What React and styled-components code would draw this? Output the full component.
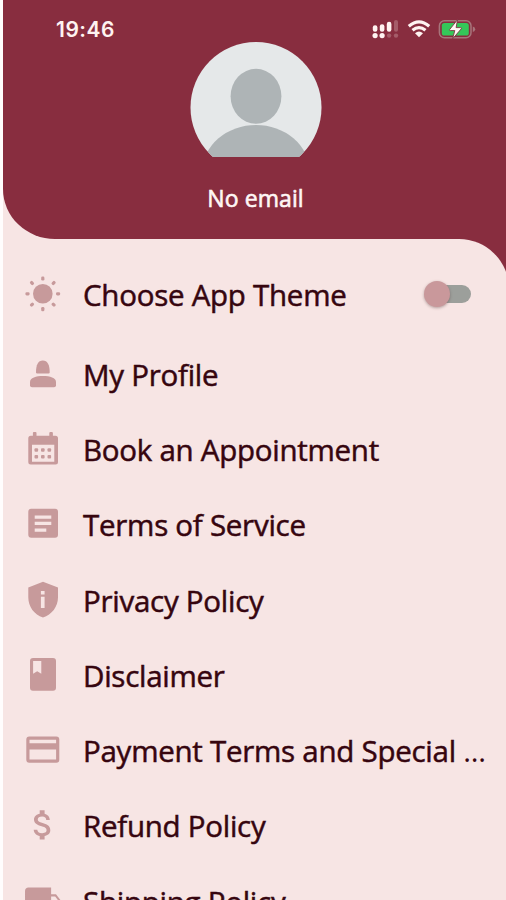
import React, { useState } from 'react';
import styled, { createGlobalStyle } from 'styled-components';

const GlobalStyle = createGlobalStyle`
	* {
		box-sizing: border-box;
	}
	body {
		margin: 0;
		background: #fffdfd;
		overflow: hidden;
	}
`;

const Screen = styled.div`
	width: 100%;
	height: 900px;
	padding-left: 3px;
	overflow: hidden;
	background: #fffdfd;
	font-family: 'Open Sans', 'Noto Sans', sans-serif;
`;

const Drawer = styled.div`
	width: 506px;
	background: #f7e5e4;
`;

const Header = styled.header`
	height: 239px;
	display: flex;
	flex-direction: column;
	background: #882d3f;
	border-bottom-left-radius: 52px 50px;
`;

const StatusBar = styled.div`
	height: 42px;
	padding: 17px 33px 0 53px;
	display: flex;
	justify-content: space-between;
	align-items: flex-start;
`;

const Time = styled.span`
	font-family: 'Inter', sans-serif;
	font-size: 21px;
	font-weight: 600;
	line-height: 26px;
	letter-spacing: 0.5px;
	color: #fff3f1;
`;

const StatusIcons = styled.svg`
	width: 106px;
	height: 25px;
`;

const Account = styled.div`
	width: 505px;
	display: flex;
	flex-direction: column;
	align-items: center;
`;

const Avatar = styled.svg`
	width: 132px;
	height: 115px;
`;

const Email = styled.div`
	margin-top: 26px;
	font-size: 23px;
	line-height: 31px;
	letter-spacing: 0.1px;
	color: #fff6f5;
	-webkit-text-stroke: 0.6px #fff6f5;
`;

const PanelBack = styled.div`
	background: #882d3f;
`;

const Panel = styled.nav`
	height: 661px;
	padding-top: 12px;
	overflow: hidden;
	background: #f7e5e4;
	border-top-right-radius: 50px;
`;

const Row = styled.div`
	height: ${(props) => (props.$tall ? '85px' : '75.3px')};
	padding-left: 20px;
	padding-right: 38px;
	display: flex;
	align-items: center;
`;

const Icon = styled.svg`
	width: 40px;
	height: 40px;
	flex: none;
	fill: #c79a9b;
`;

const Label = styled.span`
	flex: 1;
	padding-top: 2px;
	margin-left: 20px;
	font-size: 29.5px;
	line-height: 40px;
	white-space: nowrap;
	color: #36050f;
	-webkit-text-stroke: 0.5px #36050f;
	letter-spacing: -0.26px;
`;

const Dots = styled.span`
	-webkit-text-stroke: 0;
`;

const Track = styled.button`
	width: 46px;
	height: 18px;
	padding: 0;
	border: 0;
	border-radius: 9px;
	display: flex;
	align-items: center;
	justify-content: ${(props) => (props.$on ? 'flex-end' : 'flex-start')};
	background: #9c9f9b;
`;

const Thumb = styled.span`
	width: 26px;
	height: 26px;
	flex: none;
	margin-left: -1px;
	border-radius: 50%;
	background: #c9989b;
	box-shadow: 0 1px 3px rgba(80, 50, 50, 0.4);
`;

const icons = {
	sun: (
		<>
			<circle cx="19.8" cy="19.8" r="9.8" />
			{[0, 45, 90, 135, 180, 225, 270, 315].map((angle) => (
				<rect
					key={angle}
					x="18.2"
					y="2.4"
					width="3.2"
					height="4.2"
					rx="1.3"
					transform={`rotate(${angle} 19.8 19.8)`}
				/>
			))}
		</>
	),
	person: (
		<>
			<path d="M13 18.5C13 11 15 6.6 19.8 6.6S26.7 11 26.7 18.5Q26.7 19.6 25.5 19.6H14.2Q13 19.6 13 18.5Z" />
			<path d="M7 28C7 23.8 13 22 20 22s13 1.8 13 6v3.3q0 2-2 2H9q-2 0-2-2Z" />
		</>
	),
	calendar: (
		<>
			<rect x="9.9" y="3" width="3.6" height="6" rx="1" />
			<rect x="26.3" y="3" width="3.6" height="6" rx="1" />
			<path
				fillRule="evenodd"
				d="M7.8 6.7H32.5Q35 6.7 35 9.2V33Q35 35.5 32.5 35.5H7.8Q5.3 35.5 5.3 33V9.2Q5.3 6.7 7.8 6.7ZM9 15.7V32.7H31.3V15.7Z"
			/>
			{[21, 27.7].map((y) =>
				[13.3, 19.8, 26.3].map((x) => (
					<rect key={`${x}-${y}`} x={x - 1.8} y={y - 1.7} width="3.6" height="3.4" rx="1" />
				))
			)}
		</>
	),
	article: (
		<path
			fillRule="evenodd"
			d="M8.3 4.8H32Q35 4.8 35 7.8V30.8Q35 33.8 32 33.8H8.3Q5.3 33.8 5.3 30.8V7.8Q5.3 4.8 8.3 4.8ZM11.7 11.4V14.7H28.3V11.4ZM11.7 17.8V21.1H28.3V17.8ZM11.7 24.4V27.7H23.3V24.4Z"
		/>
	),
	shield: (
		<path
			fillRule="evenodd"
			d="M20 1.8L35 7.6V17.5C35 26.6 28.8 34.8 20 37.4C11.2 34.8 5.3 26.6 5.3 17.5V7.6ZM17.9 11V14.6H21.6V11ZM17.9 16.8V28H21.6V16.8Z"
		/>
	),
	book: (
		<path
			fillRule="evenodd"
			d="M10 3.1H30Q33 3.1 33 6.1V32.8Q33 35.8 30 35.8H10Q7 35.8 7 32.8V6.1Q7 3.1 10 3.1ZM10.1 6V18.8L14.2 16.2L18.3 18.8V6Z"
		/>
	),
	card: (
		<path
			fillRule="evenodd"
			d="M6.3 6.5H33.3Q36.3 6.5 36.3 9.5V29.8Q36.3 32.8 33.3 32.8H6.3Q3.3 32.8 3.3 29.8V9.5Q3.3 6.5 6.3 6.5ZM6.5 9.8V13.2H33.1V9.8ZM6.5 19.5V29.6H33.1V19.5Z"
		/>
	),
	money: (
		<path
			transform="translate(0.4 0.3) scale(1.63)"
			d="M11.8 10.9c-2.27-.59-3-1.2-3-2.15 0-1.09 1.01-1.85 2.7-1.85 1.78 0 2.44.85 2.5 2.1h2.21c-.07-1.72-1.12-3.3-3.21-3.81V3h-3v2.16c-1.94.42-3.5 1.68-3.5 3.61 0 2.31 1.91 3.46 4.7 4.13 2.5.6 3 1.48 3 2.41 0 .69-.49 1.79-2.7 1.79-2.06 0-2.87-.92-2.98-2.1h-2.2c.12 2.19 1.76 3.42 3.68 3.83V21h3v-2.15c1.95-.37 3.5-1.5 3.5-3.55 0-2.84-2.43-3.81-4.7-4.4z"
		/>
	),
	truck: (
		<path
			transform="translate(0.4 0.1) scale(1.63)"
			d="M20 8h-3V4H3c-1.1 0-2 .9-2 2v11h2c0 1.66 1.34 3 3 3s3-1.34 3-3h6c0 1.66 1.34 3 3 3s3-1.34 3-3h2v-5l-3-4zm-.5 1.5l1.96 2.5H17V9.5h2.5z"
		/>
	),
};

const menuItems = [
	{ icon: 'person', label: 'My Profile' },
	{ icon: 'calendar', label: 'Book an Appointment' },
	{ icon: 'article', label: 'Terms of Service' },
	{ icon: 'shield', label: 'Privacy Policy' },
	{ icon: 'book', label: 'Disclaimer' },
	{ icon: 'card', label: 'Payment Terms and Special ', cut: true },
	{ icon: 'money', label: 'Refund Policy' },
	{ icon: 'truck', label: 'Shipping Policy' },
];

const PhoneStatus = () => (
	<StatusIcons viewBox="370 17 106 25">
		<g fill="#fff3f1">
			<rect x="372.8" y="25.3" width="4.6" height="6.4" rx="2.2" />
			<rect x="379.8" y="24.3" width="4.6" height="7.4" rx="2.2" />
			<rect x="386.8" y="21.8" width="4.6" height="9.9" rx="2.2" />
			<circle cx="375.1" cy="35.6" r="2.6" />
			<circle cx="382.1" cy="35.6" r="2.6" />
		</g>
		<g fill="#a55c69">
			<circle cx="389.1" cy="35.6" r="2.2" />
			<rect x="394" y="20" width="4" height="11.7" rx="2" />
			<circle cx="396" cy="35.6" r="2.2" />
		</g>
		<g fill="none" stroke="#fff3f1" strokeWidth="3.2">
			<path d="M408.8 26.3Q419 17.6 429.2 26.3" />
			<path d="M412.5 30.3Q419 24.8 425.5 30.3" />
		</g>
		<path fill="#fff3f1" d="M415 33.2Q419 30 423 33.2L419 37.3Z" />
		<rect x="439.4" y="20.7" width="31.6" height="17" rx="5" fill="none" stroke="#a7747b" strokeWidth="1.5" />
		<path fill="#a7747b" d="M472.8 26.5Q475.2 27 475.2 29.2T472.8 32Z" />
		<rect x="441.8" y="23" width="27" height="12.6" rx="2.6" fill="#35c759" />
		<path
			fill="#fff8f5"
			stroke="#7b3441"
			strokeWidth="0.9"
			d="M457.6 19.6L449.6 29.6Q449.3 30.6 450.3 30.6H454.8L452.6 38.8L461.3 28.8Q461.9 27.6 460.6 27.6H456.1Z"
		/>
	</StatusIcons>
);

const ProfilePicture = () => (
	<Avatar viewBox="0 0 132 115">
		<defs>
			<clipPath id="avatar-circle">
				<circle cx="66" cy="65.5" r="65.5" />
			</clipPath>
		</defs>
		<g clipPath="url(#avatar-circle)">
			<rect width="132" height="115" fill="#e5e8e9" />
			<ellipse cx="66" cy="54.3" rx="25.4" ry="27.5" fill="#aeb4b6" />
			<ellipse cx="66" cy="128" rx="53" ry="45" fill="#aeb4b6" />
		</g>
	</Avatar>
);

const App = () => {
	const [themeOn, setThemeOn] = useState(false);

	return (
		<Screen>
			<GlobalStyle />
			<Drawer>
				<Header>
					<StatusBar>
						<Time>19:46</Time>
						<PhoneStatus />
					</StatusBar>
					<Account>
						<ProfilePicture />
						<Email>No email</Email>
					</Account>
				</Header>
				<PanelBack>
					<Panel>
						<Row $tall>
							<Icon viewBox="0 0 40 40">{icons.sun}</Icon>
							<Label>Choose App Theme</Label>
							<Track $on={themeOn} onClick={() => setThemeOn(!themeOn)} aria-label="Choose App Theme">
								<Thumb />
							</Track>
						</Row>
						{menuItems.map((item) => (
							<Row key={item.label}>
								<Icon viewBox="0 0 40 40">{icons[item.icon]}</Icon>
								<Label>
									{item.label}
									{item.cut && <Dots>...</Dots>}
								</Label>
							</Row>
						))}
					</Panel>
				</PanelBack>
			</Drawer>
		</Screen>
	);
};

export default App;
